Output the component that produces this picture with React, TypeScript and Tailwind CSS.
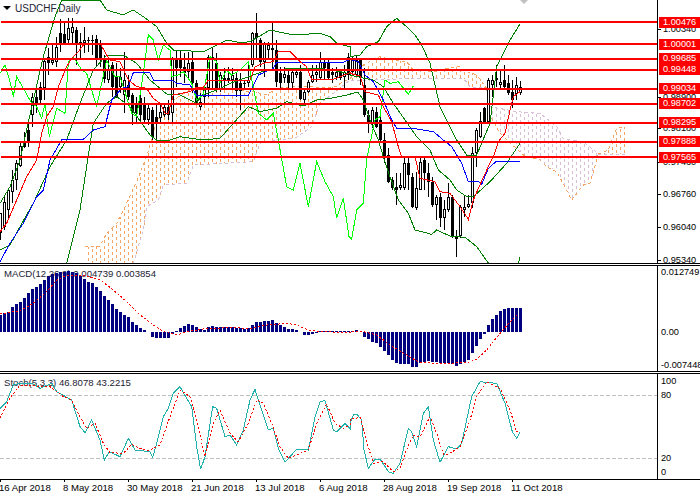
import React from "react";

type C = [number, number, number, number, number];
// body top, body bottom, wick high, wick low, 1 = white body
const candles: C[] = [
[640,700,640,720,1],[605,680,590,690,1],[570,630,565,660,1],[540,575,510,610,1],[490,540,480,570,1],[437,497,430,500,1],[430,440,395,445,0],[390,430,370,440,0],[290,345,280,380,1],[290,310,255,340,0],[260,300,245,310,0],[182,265,175,300,1],[170,190,145,225,0],[180,190,130,195,1],[140,185,110,200,1],[100,130,58,155,0],[103,135,70,130,0],[85,120,55,130,1],[82,100,55,130,1],[90,135,80,195,0],[125,130,100,175,0],[120,130,80,160,1],[120,123,110,155,0],[120,123,105,165,0],[118,175,105,200,0],[130,180,120,200,0],[180,238,165,250,0],[210,240,175,250,1],[195,260,185,290,0],[230,290,190,295,0],[230,260,205,280,1],[240,285,155,340,1],[255,290,225,300,0],[285,340,280,375,0],[315,340,290,365,0],[295,345,285,365,0],[315,360,290,365,0],[325,360,310,375,1],[330,410,320,420,0],[350,365,315,420,0],[335,355,310,365,1],[320,345,315,350,1],[320,345,300,360,0],[175,340,170,365,1],[175,205,150,260,0],[180,205,150,230,0],[200,220,160,250,0],[190,215,155,240,1],[187,250,155,280,0],[250,310,240,315,0],[305,320,280,330,1],[260,290,255,310,1],[170,265,165,290,1],[170,180,140,270,1],[190,265,160,275,0],[225,270,215,275,1],[235,240,205,270,0],[235,240,200,250,0],[225,240,205,270,1],[235,272,215,290,0],[250,272,220,330,0],[248,252,240,265,0],[240,248,190,260,1],[100,195,95,200,1],[100,115,40,175,0],[120,185,115,200,0],[130,185,125,230,1],[135,150,125,175,1],[145,150,70,210,0],[150,245,120,260,0],[220,248,200,265,0],[222,235,200,250,1],[225,250,210,265,0],[215,250,205,265,1],[215,225,210,235,1],[215,298,195,300,0],[275,300,265,315,1],[245,275,240,280,1],[225,245,195,250,1],[215,225,195,245,1],[185,235,155,240,1],[185,205,180,240,0],[190,235,175,240,0],[215,225,205,250,0],[215,230,200,240,1],[215,235,210,240,0],[215,230,195,270,1],[170,225,160,240,0],
[180,215,170,225,1],[180,225,165,225,1],[180,235,175,255,0],[255,345,205,350,0],[345,370,330,400,0],[330,370,320,385,1],[335,380,320,385,0],[360,420,340,430,0],[420,470,400,490,0],[465,545,445,550,0],[540,565,530,570,0],[560,570,520,615,0],[555,565,520,570,1],[490,565,470,570,1],[490,525,470,570,0],[530,620,520,625,0],[565,625,515,630,1],[485,570,470,570,1],[480,520,470,570,0],[520,545,490,590,0],[545,615,530,620,0],[590,615,585,660,1],[590,655,580,680,0],[628,655,600,690,1],[590,630,550,635,1],[590,710,585,715,0],[708,718,690,770,0],[620,708,615,715,1],[620,630,585,650,1],[612,620,585,625,1],[460,610,440,625,1],[390,460,385,500,1],[362,410,335,415,1],[325,365,320,370,0],[240,365,235,370,1],[240,255,225,290,1],[235,240,195,260,0],[245,255,210,265,1],[240,262,195,265,0],[250,280,225,285,0],[275,300,240,325,0],[255,282,230,300,1],[262,280,243,285,1],
];

const macdTops = [165,160,155,142,132,125,115,100,88,82,72,60,48,42,38,37,36,33,36,38,48,57,65,70,80,92,107,120,132,148,155,165,172,187,195,205,210,215,232,233,233,233,233,222,212,203,197,192,194,200,207,209,202,198,200,201,201,202,202,204,205,207,205,195,187,187,184,182,180,190,195,202,207,207,210,217,224,224,222,220,213,213,213,214,214,214,214,214,212,211,215,230,238,245,250,260,273,285,300,308,313,312,312,320,320,310,306,303,305,305,308,310,308,312,317,312,306,300,278,258,237,222,195,177,165,152,147,144,144,144,144];

const right = (s: string) =>
  s.trim().split(/\s+/).map((p) => { const [x, y] = p.split(","); return `${Number(x) + 1050},${y}`; }).join(" ");

const redLine = "0,695 20,670 50,600 80,530 110,480 125,400 140,350 160,320 175,260 200,200 215,175 235,155 250,135 270,130 300,130 320,165 330,180 360,185 385,240 410,260 440,265 460,295 480,310 495,340 505,340 520,285 570,275 590,262 610,262 625,240 750,240 765,200 790,190 820,185 835,155 870,155 900,185 920,200 935,240 1000,238 1050,218 " + right("0,220 30,228 45,275 85,285 100,320 125,365 145,440 155,470 195,470 210,535 255,545 270,575 300,580 330,620 355,658 370,600 385,565 415,500 430,470 445,425 465,400 480,330 490,290 510,275");
const blueLine = "0,785 30,730 70,670 110,590 130,570 150,480 185,420 250,418 280,390 315,380 335,300 365,265 385,260 400,218 450,218 460,240 515,240 530,250 570,255 590,285 745,285 775,225 820,205 830,187 1030,187 1050,178 " + right("0,178 25,185 45,225 70,245 100,300 125,360 140,385 190,385 250,395 280,420 305,440 335,490 355,545 385,545 395,553 415,505 440,483 510,483");
const bbUpper = "0,610 30,560 60,480 100,300 130,170 165,50 185,0 300,0 320,30 370,45 400,30 430,50 470,80 500,130 520,150 610,155 630,145 680,120 720,128 750,125 810,90 880,105 960,100 990,110 1010,130 1050,140 " + right("0,170 30,165 50,140 85,125 110,80 140,55 170,80 195,105 215,135 240,190 270,320 320,420 350,465 380,465 420,370 440,200 480,120 510,72");
const bbLower = "200,789 240,630 280,370 320,310 350,290 390,320 450,405 470,420 510,420 540,410 610,420 660,415 700,370 745,320 780,335 830,325 860,305 910,318 950,300 990,295 1050,283 " + right("0,280 25,278 40,300 60,360 85,420 100,470 120,530 145,600 175,640 195,690 245,703 260,690 300,708 345,712 380,740 415,789");
const bbLower2 = right("505,789 510,772");
const bbMiddle = "0,750 30,735 60,680 100,610 150,500 200,420 240,310 280,210 320,165 370,165 410,190 450,240 500,282 540,285 590,310 605,285 650,270 690,250 760,225 800,210 830,210 870,205 960,205 1020,215 1050,222 " + right("0,225 30,232 70,240 100,260 130,310 165,360 200,410 240,450 265,510 300,540 320,570 350,590 370,590 420,545 470,490 510,430");
const chikou = "0,220 15,195 30,245 40,290 50,230 70,265 95,310 110,320 125,355 135,310 148,410 170,325 195,340 205,185 220,170 245,210 260,220 290,320 320,180 345,230 360,230 395,340 410,350 430,220 445,105 460,120 475,180 490,135 510,150 515,230 535,225 550,215 575,250 590,300 610,285 630,170 650,185 660,250 680,210 695,225 720,210 745,185 775,340 800,360 820,340 835,420 860,560 880,570 900,490 925,620 950,485 975,545 1000,590 1010,655 1030,595 1047,710 " + right("5,718 20,630 40,610 50,480 60,430 75,360 90,350 105,240 120,250 145,245 175,283 190,258");

const macdSignal = "0,162 60,152 100,130 140,95 170,60 200,45 250,45 300,60 340,90 380,125 420,165 460,195 490,215 530,225 560,215 620,205 700,203 750,205 800,195 860,190 890,195 930,212 1000,216 1050,216 " + right("0,215 40,215 80,225 120,255 170,285 210,308 280,310 350,308 380,298 410,270 450,220 480,185 505,162");
const stochMain = "0,445 20,425 40,375 60,370 100,372 120,385 155,370 170,395 215,420 240,500 255,518 275,480 300,540 313,600 328,575 360,590 385,535 405,570 450,575 458,592 470,550 490,470 505,445 520,400 540,380 560,415 575,440 590,560 602,628 615,590 638,440 650,445 675,530 690,525 710,555 730,510 750,420 765,388 775,420 805,510 820,505 835,565 855,606 890,568 925,570 945,470 960,425 975,422 1000,510 1010,515 1035,490 1050,505 " + right("0,490 10,465 20,462 35,480 42,570 55,625 75,597 90,597 115,635 130,640 150,610 175,505 185,515 200,560 220,460 235,440 250,540 270,607 295,560 320,567 335,550 365,410 390,365 410,367 440,370 465,430 487,515 500,535 510,515");
const stochSignal = "0,475 30,415 60,375 110,378 150,380 190,410 215,420 240,470 260,505 285,490 310,550 330,578 370,580 395,553 420,565 445,572 480,555 510,470 540,390 570,410 590,480 615,590 640,490 660,450 690,520 715,545 745,490 770,420 790,430 815,490 840,560 865,595 925,570 950,490 980,432 1005,490 1030,505 1050,495 " + right("0,478 30,472 50,545 70,610 100,605 130,635 150,625 175,555 190,525 210,530 240,470 260,520 280,583 295,583 330,560 360,480 380,410 410,365 450,385 480,450 500,515 510,515");

type P = [number, number];
const R = (a: P[]): P[] => a.map(([x, y]) => [x + 1050, y] as P);
const orangeTop: P[] = [[255,740],[300,738],[320,700],[350,670],[375,620],[410,545],[440,470],[470,360],[500,340],[520,300],[570,270],[600,262],[760,275],[800,285],[830,265],[890,260],[1000,262],[1050,235],...R([[40,195],[90,170],[130,180],[170,185],[190,210],[250,215],[290,205],[330,200],[350,215],[380,225],[410,265]])];
const orangeBottom: P[] = [[255,789],[400,789],[430,690],[440,620],[475,600],[490,555],[560,550],[580,495],[760,485],[780,430],[825,420],[885,415],[935,380],[960,310],[1000,280],[1050,240],...R([[20,240],[60,240],[190,235],[340,235],[360,260],[410,265]])];
const pinkTop: P[] = R([[410,265],[420,320],[500,335],[570,340],[620,380],[640,415],[700,425],[745,462]]);
const pinkBottom: P[] = R([[410,265],[420,345],[450,400],[520,465],[570,480],[590,500],[620,515],[650,570],[665,600],[700,555],[720,550],[745,462]]);
const tailTop: P[] = R([[745,462],[775,450],[800,385],[825,382]]);
const tailBottom: P[] = R([[745,462],[825,462]]);

const at = (pts: P[], x: number) => {
  for (let k = 0; k < pts.length - 1; k++) {
    const [x0, y0] = pts[k];
    const [x1, y1] = pts[k + 1];
    if (x >= x0 && x <= x1) return y0 + ((y1 - y0) * (x - x0)) / (x1 - x0 || 1);
  }
  return null;
};
const toStr = (a: P[]) => a.map((p) => p.join(",")).join(" ");

const cloudColumns = (top: P[], bottom: P[], color: string) => {
  const out: React.ReactNode[] = [];
  for (let X = 0; X <= 2000; X += 12) {
    const t = at(top, X);
    const b = at(bottom, X);
    if (t === null || b === null) continue;
    const phase = (t + (X % 24 === 0 ? 0 : 9)) % 18;
    out.push(
      <line key={color + X} x1={X + 1.5} x2={X + 1.5} y1={t} y2={b} stroke={color} strokeWidth={3} strokeDasharray="9 9" strokeDashoffset={phase} />
    );
  }
  return out;
};

const SANDY = "#f4a460";
const THISTLE = "#d8bfd8";

const levels = [21, 43, 58, 69, 88, 103, 122, 141, 156];
const priceTags = [
  { t: 17, v: "1.00476" }, { t: 39, v: "1.00001" }, { t: 53, v: "0.99685" }, { t: 64, v: "0.99448" },
  { t: 83, v: "0.99034" }, { t: 98, v: "0.98702" }, { t: 117, v: "0.98295" }, { t: 136, v: "0.97888" }, { t: 152, v: "0.97565" },
];
const priceAxis = [
  { c: 29, v: "1.00340" }, { c: 97, v: "0.98900" }, { c: 128, v: "0.98180" }, { c: 162, v: "0.97460" },
  { c: 194, v: "0.96760" }, { c: 227, v: "0.96040" }, { c: 260, v: "0.95340" },
];
const macdAxis = [{ c: 6, v: "0.012749" }, { c: 66, v: "0.00" }, { c: 99, v: "-0.007448" }];
const stochAxis = [{ c: 7, v: "100" }, { c: 21, v: "80" }, { c: 84, v: "20" }, { c: 98, v: "0" }];
const dates = ["16 Apr 2018", "8 May 2018", "30 May 2018", "21 Jun 2018", "13 Jul 2018", "6 Aug 2018", "28 Aug 2018", "19 Sep 2018", "11 Oct 2018"];

function Axis({ items, tight }: { items: { c: number; v: string }[]; tight?: boolean }) {
  return (
    <div className="relative flex-1 text-[9.2px]">
      {items.map((a) => (
        <div key={a.v} className="absolute left-0 flex items-center h-[11px] whitespace-nowrap" style={{ top: a.c - 5.5 }}>
          <i className={tight ? "block w-[3px] h-0 mr-0" : "block w-[3px] h-px bg-black mr-[2px]"} />
          <span>{a.v}</span>
        </div>
      ))}
    </div>
  );
}

const LINE = { fill: "none", strokeWidth: 3, shapeRendering: "crispEdges" as const };

export default function App() {
  return (
    <div className="w-[700px] h-[500px] bg-white overflow-hidden text-black text-[9.6px] leading-[11px] font-['Liberation_Sans',Arial,sans-serif]">
      {/* main chart */}
      <div className="flex h-[264px] border-b border-black">
        <div className="relative w-[658px] border-r border-black shrink-0">
          <div className="absolute left-[3px] top-[6px] w-0 h-0 border-x-[4px] border-x-transparent border-t-[4px] border-t-black" />
          <span className="absolute left-[15px] top-[3px] text-[10px] text-[#223]">USDCHF,Daily</span>
          <svg className="relative block w-[657px] h-[263px]" viewBox="0 0 1971 789">
            <polygon points="1560,0 1584,0 1572,12" fill="#c0c0c0" />
            <g shapeRendering="crispEdges">
              {cloudColumns(orangeTop, orangeBottom, SANDY)}
              {cloudColumns(pinkTop, pinkBottom, THISTLE)}
              {cloudColumns(tailTop, tailBottom, SANDY)}
              <polyline points={toStr(orangeTop)} fill="none" stroke={SANDY} strokeWidth={3} strokeDasharray="9 9" />
              <polyline points={toStr(orangeBottom)} fill="none" stroke={THISTLE} strokeWidth={3} strokeDasharray="9 9" />
              <polyline points={toStr(pinkTop)} fill="none" stroke={THISTLE} strokeWidth={3} strokeDasharray="9 9" />
              <polyline points={toStr(pinkBottom)} fill="none" stroke={SANDY} strokeWidth={3} strokeDasharray="9 9" />
              <polyline points={toStr(tailTop)} fill="none" stroke={SANDY} strokeWidth={3} strokeDasharray="9 9" />
              <polyline points={toStr(tailBottom)} fill="none" stroke={THISTLE} strokeWidth={3} strokeDasharray="9 9" />
            </g>
            <g shapeRendering="crispEdges">
              {candles.map(([t, b, h, l, w], i) => (
                <g key={i}>
                  <rect x={12 * i} y={h} width={3} height={Math.max(l - h, 3)} fill="#000" />
                  <rect x={12 * i - 3} y={t} width={9} height={Math.max(b - t, 3)} fill="#000" />
                  {w === 1 && b - t > 6 ? <rect x={12 * i} y={t + 3} width={3} height={b - t - 6} fill="#fff" /> : null}
                </g>
              ))}
            </g>
            <polyline points={bbUpper} stroke="#008000" {...LINE} />
            <polyline points={bbLower} stroke="#008000" {...LINE} />
            <polyline points={bbLower2} stroke="#008000" {...LINE} />
            <polyline points={bbMiddle} stroke="#008000" {...LINE} />
            <polyline points={chikou} stroke="#00ff00" {...LINE} />
            <polyline points={blueLine} stroke="#0000ff" {...LINE} />
            <polyline points={redLine} stroke="#ff0000" {...LINE} />
            {levels.map((r) => (
              <rect key={r} x={3} y={r * 3} width={1968} height={6} fill="#ff0000" shapeRendering="crispEdges" />
            ))}
          </svg>
        </div>
        <div className="relative flex-1">
          <Axis items={priceAxis} />
          {priceTags.map((p) => (
            <div key={p.v} className="absolute left-px w-[41px] h-[11px] bg-[#ff0000] text-white text-[9.2px] pl-[4px]" style={{ top: p.t }}>
              {p.v}
            </div>
          ))}
        </div>
      </div>

      {/* MACD */}
      <div className="flex h-[107px] mt-px border-y border-black">
        <div className="relative w-[658px] border-r border-black shrink-0">
          <span className="absolute left-[4px] top-[2px] text-[#223]">MACD(12,26,9) 0.004739 0.003854</span>
          <svg className="relative block w-[657px] h-[105px]" viewBox="0 18 1971 315">
            <g shapeRendering="crispEdges">
              {macdTops.map((t, i) => (
                <rect key={i} x={12 * i - 3} y={Math.min(t, 215)} width={9} height={Math.max(Math.abs(215 - t), 1)} fill="#000080" />
              ))}
            </g>
            <polyline points={macdSignal} stroke="#ff0000" strokeDasharray="6 6" {...LINE} />
          </svg>
        </div>
        <Axis items={macdAxis} tight />
      </div>

      {/* Stochastic */}
      <div className="flex h-[107px] mt-px border-y border-black">
        <div className="relative w-[658px] border-r border-black shrink-0">
          <span className="absolute left-[4px] top-[3px] text-[#223]">Stoch(5,3,3) 46.8078 43.2215</span>
          <svg className="relative block w-[657px] h-[105px]" viewBox="0 342 1971 315">
            <g shapeRendering="crispEdges">
              <line x1={0} x2={1971} y1={406} y2={406} stroke="#c0c0c0" strokeWidth={3} strokeDasharray="12 6" />
              <line x1={0} x2={1971} y1={595} y2={595} stroke="#c0c0c0" strokeWidth={3} strokeDasharray="12 6" />
            </g>
            <polyline points={stochMain} stroke="#20b2aa" {...LINE} />
            <polyline points={stochSignal} stroke="#ff0000" strokeDasharray="6 6" {...LINE} />
          </svg>
        </div>
        <Axis items={stochAxis} tight />
      </div>

      {/* Dates */}
      <div className="flex">
        {dates.map((d) => (
          <div key={d} className="w-[64px] shrink-0 whitespace-nowrap">
            <i className="block w-px h-[2px] bg-black" />
            <span className="block -ml-px">{d}</span>
          </div>
        ))}
      </div>
    </div>
  );
}
